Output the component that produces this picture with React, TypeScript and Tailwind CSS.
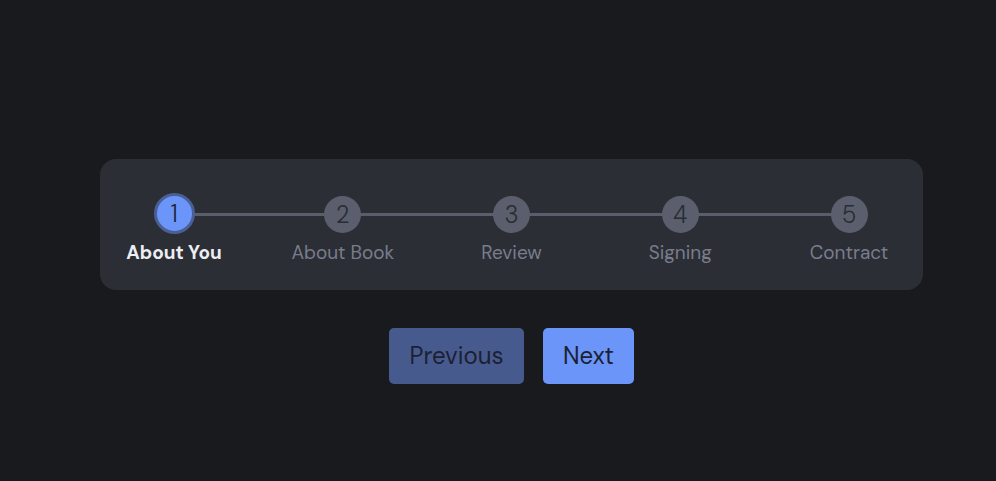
const STEPS = ['About You', 'About Book', 'Review', 'Signing', 'Contract'];

export default function App() {
  const current = 0;
  return (
    <div
      className="w-[996px] h-[481px] bg-[#191a1e] pt-[159px] pl-[100px]"
      style={{ fontFamily: '"DM Sans", Inter, "Noto Sans", sans-serif' }}
    >
      {/* Stepper */}
      <div className="w-[823px] h-[131px] bg-[#2c2e35] rounded-2xl px-[26px] pt-[36px]">
        <div className="relative flex justify-between">
          <div className="absolute left-[48px] right-[48px] top-[18px] h-[3px] bg-[#5a5e6c]" />
          {STEPS.map((label, i) => {
            const active = i === current;
            return (
              <div key={label} className="relative w-[96px] flex flex-col items-center">
                {active ? (
                  <div className="w-[41px] h-[41px] -mt-[2px] -mb-[1px] rounded-full bg-[#6c95f9] border-[3px] border-[#4b5f97] flex items-center justify-center text-[24px] font-light text-[#1f2535]">
                    {i + 1}
                  </div>
                ) : (
                  <div className="w-[37px] h-[37px] mt-[1px] rounded-full bg-[#5b5f6d] flex items-center justify-center text-[24px] font-light text-[#2a2c33]">
                    {i + 1}
                  </div>
                )}
                <div
                  className={`mt-[8px] whitespace-nowrap text-[19px] leading-[24px] ${
                    active ? 'font-bold text-[#eceef3]' : 'text-[#787d8c]'
                  }`}
                >
                  {label}
                </div>
              </div>
            );
          })}
        </div>
      </div>

      {/* Buttons */}
      <div className="w-[823px] flex justify-center gap-[19px] mt-[38px]">
        <button className="w-[135px] h-[56px] rounded-[5px] bg-[#475a8e] text-[#1b2133] text-[24px]">
          Previous
        </button>
        <button className="w-[91px] h-[56px] rounded-[5px] bg-[#6c95f9] text-[#1b2133] text-[24px]">
          Next
        </button>
      </div>
    </div>
  );
}
